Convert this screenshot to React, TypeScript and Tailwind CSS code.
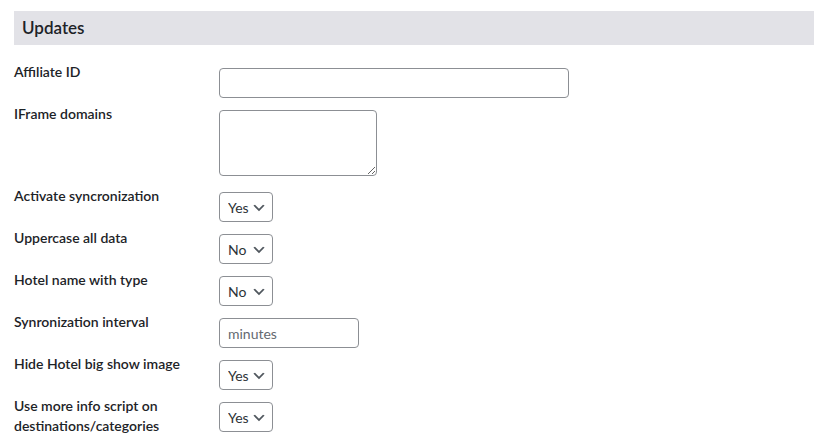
import { ReactNode } from "react";

const font = { fontFamily: 'Lato, "Noto Sans", sans-serif' };

function Chevron() {
  return (
    <svg
      viewBox="0 0 20 20"
      className="pointer-events-none absolute right-[6px] top-[8px] h-4 w-4"
      fill="#50575e"
    >
      <path d="M5 6l5 5 5-5 2 1-7 7-7-7 2-1z" />
    </svg>
  );
}

function YesNo({ value }: { value: string }) {
  return (
    <div className="relative inline-block">
      <select
        defaultValue={value}
        className="h-[30px] w-[54px] appearance-none rounded-[4px] border border-[#8c8f94] bg-white pl-[8px] pr-[20px] text-[14px] text-[#2c3338] outline-none"
      >
        <option>Yes</option>
        <option>No</option>
      </select>
      <Chevron />
    </div>
  );
}

function Row({ label, children }: { label: ReactNode; children: ReactNode }) {
  return (
    <div className="flex items-start">
      <div className="w-[205px] shrink-0 text-[14px] font-semibold leading-[20px] text-[#1d2327]">
        {label}
      </div>
      <div className="mt-[6px]">{children}</div>
    </div>
  );
}

export default function App() {
  return (
    <div className="min-h-[444px] bg-white px-[14px] pt-[11px]" style={font}>
      <div className="flex h-[34px] w-[800px] items-center bg-[#e2e2e7] px-[8px]">
        <h2 className="text-[17px] font-semibold text-[#1d2327]">Updates</h2>
      </div>

      <div className="mt-[17px] flex flex-col gap-[6px]">
        <Row label="Affiliate ID">
          <input
            type="text"
            className="block h-[30px] w-[350px] rounded-[4px] border border-[#8c8f94] bg-white px-[8px] text-[14px] outline-none"
          />
        </Row>
        <Row label="IFrame domains">
          <textarea className="block h-[66px] w-[158px] rounded-[4px] border border-[#8c8f94] bg-white px-[8px] text-[14px] outline-none" />
          <div className="h-[4px]" />
        </Row>
        <Row label="Activate syncronization">
          <YesNo value="Yes" />
        </Row>
        <Row label="Uppercase all data">
          <YesNo value="No" />
        </Row>
        <Row label="Hotel name with type">
          <YesNo value="No" />
        </Row>
        <Row label="Synronization interval">
          <input
            type="text"
            placeholder="minutes"
            className="block h-[30px] w-[140px] rounded-[4px] border border-[#8c8f94] bg-white px-[8px] text-[14px] text-[#2c3338] outline-none placeholder:text-[#646970]"
          />
        </Row>
        <Row label="Hide Hotel big show image">
          <YesNo value="Yes" />
        </Row>
        <Row
          label={
            <>
              Use more info script on
              <br />
              destinations/categories
            </>
          }
        >
          <YesNo value="Yes" />
        </Row>
      </div>
    </div>
  );
}
